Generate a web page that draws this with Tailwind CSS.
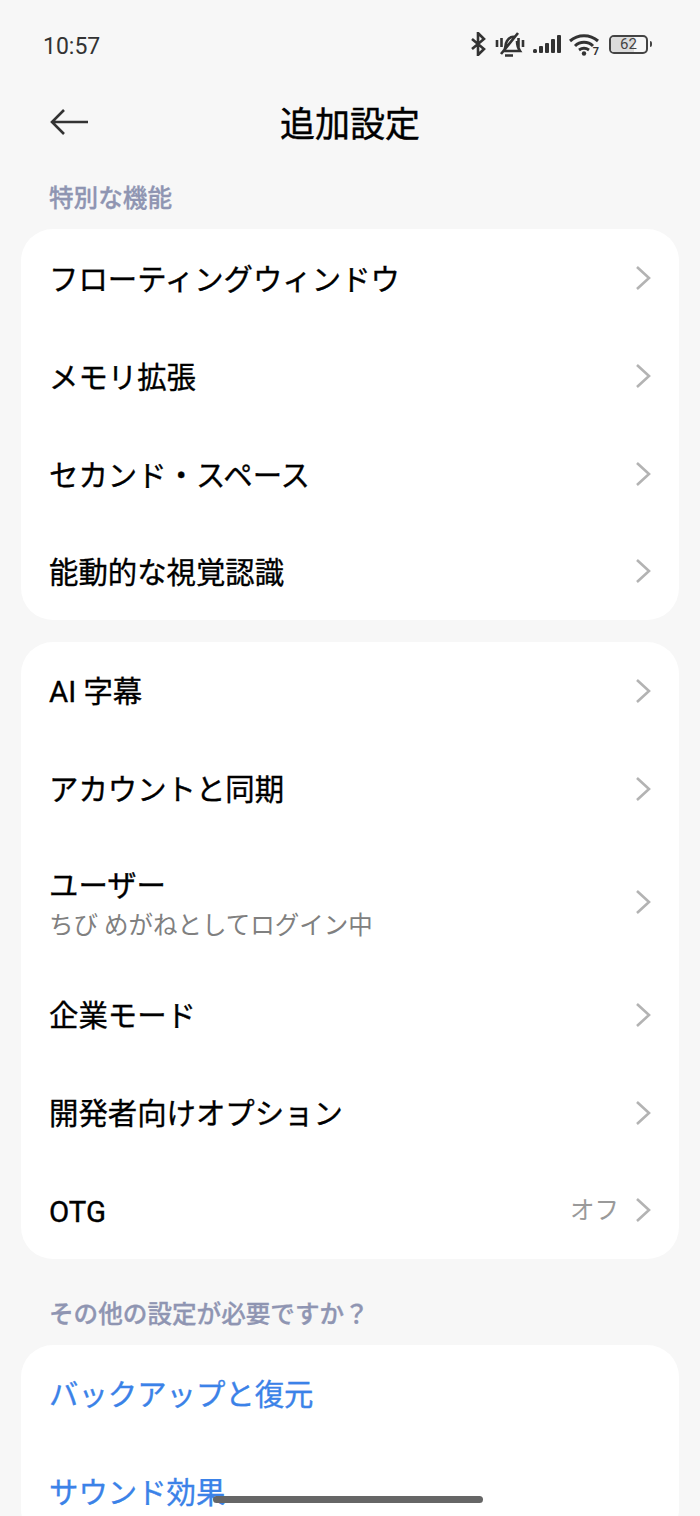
<!DOCTYPE html>
<html lang="ja">
<head>
  <meta charset="UTF-8">
  <title>追加設定</title>
  <script src="https://cdn.jsdelivr.net/npm/@tailwindcss/browser@4"></script>
</head>
<body class="bg-[#f7f7f7] font-['Roboto','Noto_Sans_CJK_JP',sans-serif] text-black antialiased">
  <div class="relative w-[700px] h-[1516px] overflow-hidden">
    <!-- status bar -->
    <div class="h-[90px] pl-[43px] pr-[48px] pt-[31px] flex justify-between items-start text-[#333]">
      <span class="text-[23px] leading-[28px] mt-[2px]">10:57</span>
      <div class="flex items-center h-[26px]">
        <svg class="w-[16px] h-[24px]" viewBox="0 0 16 24" fill="none" stroke="#333" stroke-width="2.6"><path d="M2 7l12 10-6 6V1l6 6L2 17"/></svg>
        <svg class="ml-[9px] w-[30px] h-[26px]" viewBox="0 0 30 26" fill="none" stroke="#333" stroke-width="2.6"><path d="M9 20c2-3 1-7 3-10 2-3 5-5 8-4M22 10c0 4 1 7 3 10H8M10 24.500h8M6 23L23 2M2 9v7M6.500 7v9M23.500 7v10M28 9v7"/></svg>
        <svg class="ml-[8px] w-[28px] h-[18px]" viewBox="0 0 28 18" fill="#333"><rect x="0" y="14" width="4" height="4" rx="1.500"/><rect x="6" y="11" width="4" height="7" rx="1"/><rect x="12" y="8" width="4" height="10" rx="1"/><rect x="18" y="4" width="4" height="14" rx="1"/><rect x="24" y="0" width="4" height="18" rx="1"/></svg>
        <div class="relative ml-[8px] w-[30px] h-[26px]">
          <svg class="w-[30px] h-[26px]" viewBox="0 0 30 26" fill="none" stroke="#333" stroke-width="3"><path d="M1 10c8-7 20-7 28 0M6 15c5-5 13-5 18 0M10 19c3-2 7-2 10 0"/><circle cx="15" cy="22.500" r="2.200" fill="#333" stroke="none"/></svg>
          <span class="absolute right-0 bottom-[-1px] text-[11px] leading-[12px] font-bold">7</span>
        </div>
        <div class="ml-[10px] flex items-center gap-[2px]">
          <div class="relative w-[39px] h-[19px] border-2 border-[#444] rounded-[5px] overflow-hidden flex items-center justify-center">
            <div class="absolute left-0 top-0 bottom-0 w-[66%] bg-[#dcdcdc]"></div>
            <span class="relative text-[15px] leading-[15px] text-[#444]">62</span>
          </div>
          <div class="w-[2px] h-[6px] bg-[#444] rounded-r-sm"></div>
        </div>
      </div>
    </div>

    <!-- title bar -->
    <div class="relative h-[68px] flex items-center justify-center">
      <svg class="absolute left-[49px] top-[17px] w-[40px] h-[30px]" viewBox="0 0 40 30" fill="none" stroke="#333" stroke-width="2.6"><path d="M39 15H3M15 3L3 15l12 12"/></svg>
      <h1 class="mt-[3px] text-[35px] leading-[44px] font-normal [-webkit-text-stroke:0.4px]">追加設定</h1>
    </div>

    <p class="mt-[23px] pl-[49px] text-[24.6px] leading-[36px] font-medium [-webkit-text-stroke:0.3px] text-[#8f95b2]">特別な機能</p>

    <!-- special features -->
    <div class="mt-[12px] mx-[21px] bg-white rounded-[32px] [&>div]:pl-[28px] [&>div]:pr-[28px] text-[29.4px] [-webkit-text-stroke:0.35px]">
      <div class="h-[98px] flex items-center justify-between">
        <span class="mt-[4px]">フローティングウィンドウ</span>
        <svg class="w-[16px] h-[26px] -mt-[1px]" viewBox="0 0 16 26" fill="none" stroke="#b3b3b3" stroke-width="2.6"><path d="M2 2l12 11L2 24"/></svg>
      </div>
      <div class="h-[98px] flex items-center justify-between">
        <span class="mt-[4px]">メモリ拡張</span>
        <svg class="w-[16px] h-[26px] -mt-[1px]" viewBox="0 0 16 26" fill="none" stroke="#b3b3b3" stroke-width="2.6"><path d="M2 2l12 11L2 24"/></svg>
      </div>
      <div class="h-[98px] flex items-center justify-between">
        <span class="mt-[4px]">セカンド・スペース</span>
        <svg class="w-[16px] h-[26px] -mt-[1px]" viewBox="0 0 16 26" fill="none" stroke="#b3b3b3" stroke-width="2.6"><path d="M2 2l12 11L2 24"/></svg>
      </div>
      <div class="h-[97px] flex items-center justify-between">
        <span class="mt-[3px]">能動的な視覚認識</span>
        <svg class="w-[16px] h-[26px] -mt-[2px]" viewBox="0 0 16 26" fill="none" stroke="#b3b3b3" stroke-width="2.6"><path d="M2 2l12 11L2 24"/></svg>
      </div>
    </div>

    <!-- account and others -->
    <div class="mt-[22px] mx-[21px] bg-white rounded-[32px] [&>div]:pl-[28px] [&>div]:pr-[28px] text-[29.4px] [-webkit-text-stroke:0.35px]">
      <div class="h-[98px] flex items-center justify-between">
        <span class="mt-[3px]">AI 字幕</span>
        <svg class="w-[16px] h-[26px] -mt-[1px]" viewBox="0 0 16 26" fill="none" stroke="#b3b3b3" stroke-width="2.6"><path d="M2 2l12 11L2 24"/></svg>
      </div>
      <div class="h-[98px] flex items-center justify-between">
        <span class="mt-[3px]">アカウントと同期</span>
        <svg class="w-[16px] h-[26px] -mt-[1px]" viewBox="0 0 16 26" fill="none" stroke="#b3b3b3" stroke-width="2.6"><path d="M2 2l12 11L2 24"/></svg>
      </div>
      <div class="h-[128px] flex items-center justify-between">
        <div class="flex flex-col mt-[4px]">
          <span class="leading-[42px]">ユーザー</span>
          <span class="text-[24.5px] leading-[37px] text-[#808080] [-webkit-text-stroke:0px]">ちび めがねとしてログイン中</span>
        </div>
        <svg class="w-[16px] h-[26px] -mt-[1px]" viewBox="0 0 16 26" fill="none" stroke="#b3b3b3" stroke-width="2.6"><path d="M2 2l12 11L2 24"/></svg>
      </div>
      <div class="h-[98px] flex items-center justify-between">
        <span class="mt-[3px]">企業モード</span>
        <svg class="w-[16px] h-[26px] -mt-[1px]" viewBox="0 0 16 26" fill="none" stroke="#b3b3b3" stroke-width="2.6"><path d="M2 2l12 11L2 24"/></svg>
      </div>
      <div class="h-[98px] flex items-center justify-between">
        <span class="mt-[3px]">開発者向けオプション</span>
        <svg class="w-[16px] h-[26px] -mt-[1px]" viewBox="0 0 16 26" fill="none" stroke="#b3b3b3" stroke-width="2.6"><path d="M2 2l12 11L2 24"/></svg>
      </div>
      <div class="h-[97px] flex items-center justify-between">
        <span class="mt-[3px]">OTG</span>
        <div class="flex items-center gap-[16px] -mt-[1px]">
          <span class="mt-[3px] text-[24.5px] text-[#9a9a9a] [-webkit-text-stroke:0px]">オフ</span>
          <svg class="w-[16px] h-[26px]" viewBox="0 0 16 26" fill="none" stroke="#b3b3b3" stroke-width="2.6"><path d="M2 2l12 11L2 24"/></svg>
        </div>
      </div>
    </div>

    <p class="mt-[38px] pl-[49px] text-[24.6px] leading-[36px] font-medium [-webkit-text-stroke:0.3px] text-[#8f95b2]">その他の設定が必要ですか？</p>

    <!-- links -->
    <div class="mt-[12px] mx-[21px] bg-white rounded-[32px] [&>div]:pl-[28px] text-[29.4px] text-[#3b82e8] [-webkit-text-stroke:0.35px]">
      <div class="h-[98px] flex items-center">
        <span class="mt-[3px]">バックアップと復元</span>
      </div>
      <div class="h-[98px] flex items-center">
        <span class="mt-[3px]">サウンド効果</span>
      </div>
    </div>

    <!-- gesture pill -->
    <div class="absolute left-[213px] top-[1496px] w-[270px] h-[7px] rounded-full bg-[#666]"></div>
  </div>
</body>
</html>
